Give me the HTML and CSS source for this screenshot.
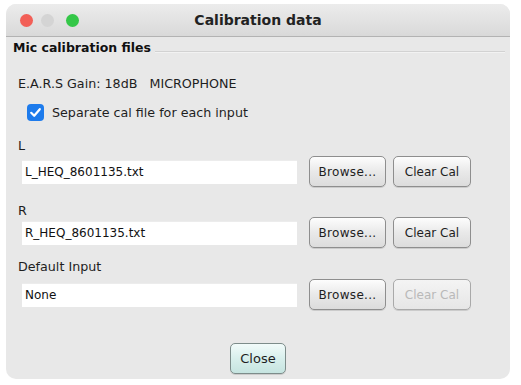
FILE: index.html
```html
<!DOCTYPE html>
<html>
<head>
<meta charset="utf-8">
<link rel="stylesheet" href="styles.css">
</head>
<body>
<div class="window">
  <div class="titlebar">
    <div class="lights">
      <span class="light red"></span>
      <span class="light gray"></span>
      <span class="light green"></span>
    </div>
    <div class="title">Calibration data</div>
  </div>
  <div class="content">
    <div class="legend">
      <span class="legend-text">Mic calibration files</span>
      <span class="legend-line"></span>
    </div>
    <div class="gain">E.A.R.S Gain: 18dB&nbsp;&nbsp;&nbsp;MICROPHONE</div>
    <label class="check-row">
      <span class="checkbox">
        <svg viewBox="0 0 17 17" width="17" height="17"><path d="M4.2 8.8 L7.2 11.8 L12.8 5.2" fill="none" stroke="#fff" stroke-width="2.2" stroke-linecap="round" stroke-linejoin="round"/></svg>
      </span>
      <span>Separate cal file for each input</span>
    </label>
    <div class="label l1">L</div>
    <div class="row">
      <div class="field">L_HEQ_8601135.txt</div>
      <button class="btn browse">Browse...</button>
      <button class="btn clear">Clear Cal</button>
    </div>
    <div class="label l2">R</div>
    <div class="row">
      <div class="field">R_HEQ_8601135.txt</div>
      <button class="btn browse">Browse...</button>
      <button class="btn clear">Clear Cal</button>
    </div>
    <div class="label l3">Default Input</div>
    <div class="row r3">
      <div class="field">None</div>
      <button class="btn browse">Browse...</button>
      <button class="btn clear disabled">Clear Cal</button>
    </div>
    <div class="footer">
      <button class="btn close">Close</button>
    </div>
  </div>
</div>
</body>
</html>
```
FILE: styles.css
```css
html, body {
  margin: 0;
  padding: 0;
  background: #ffffff;
}
body {
  font-family: "DejaVu Sans", "Liberation Sans", sans-serif;
  font-size: 12.7px;
  color: #1e1e1e;
}
.window {
  margin: 4px 0 0 6px;
  width: 504px;
  height: 375px;
  background: #e8e8e8;
  border-radius: 10px;
  overflow: hidden;
  display: flex;
  flex-direction: column;
}
.titlebar {
  height: 32px;
  flex: none;
  background: linear-gradient(#ececec, #d9d9d9);
  border-bottom: 1px solid #b3b3b3;
  display: flex;
  align-items: center;
  position: relative;
}
.lights {
  display: flex;
  gap: 8px;
  padding-left: 14px;
  margin-top: 1px;
}
.light {
  width: 13px;
  height: 13px;
  border-radius: 50%;
  display: block;
}
.red { background: #f25f57; }
.gray { background: #d4d4d4; }
.green { background: #34c748; }
.light.gray + .light.green { margin-left: 4px; }
.title {
  position: absolute;
  left: 0;
  right: 0;
  top: 0;
  bottom: 0;
  display: flex;
  align-items: center;
  justify-content: center;
  font-weight: bold;
  font-size: 14px;
  color: #222;
  pointer-events: none;
}
.content {
  flex: 1;
  display: flex;
  flex-direction: column;
}
.legend {
  height: 20px;
  display: flex;
  align-items: flex-end;
  padding-left: 7px;
  padding-right: 5px;
  gap: 4px;
}
.legend-text {
  font-weight: bold;
  font-size: 12.5px;
  color: #111;
  line-height: 18px;
}
.legend-line {
  flex: 1;
  height: 1px;
  background: #d2d2d2;
  border-bottom: 1px solid #f2f2f2;
  margin-bottom: 4px;
}
.gain {
  margin-top: 19px;
  height: 16px;
  line-height: 16px;
  padding-left: 12px;
}
.check-row {
  margin-top: 10px;
  height: 20px;
  display: flex;
  align-items: center;
  padding-left: 21px;
  gap: 8px;
}
.checkbox {
  width: 17px;
  height: 17px;
  border-radius: 4px;
  background: #1d7bec;
  display: flex;
}
.label {
  height: 14px;
  line-height: 14px;
  padding-left: 12px;
  margin-top: 16px;
}
.label.l1 { margin-top: 17px; }
.label.l2 { margin-top: 17px; }
.label.l3 { margin-top: 12px; }
.row {
  height: 31px;
  display: flex;
  align-items: center;
  padding-left: 16px;
  margin-top: 3px;
}
.label.l2 + .row { margin-top: -1px; }
.r3 { margin-top: 5px; }
.field {
  width: 275px;
  height: 24px;
  background: #fff;
  line-height: 24px;
  padding-left: 3px;
  box-sizing: border-box;
  font-size: 12px;
  color: #111;
  margin-right: 12px;
  box-shadow: inset 0 1px 0 #ececec;
}
.btn {
  font-family: inherit;
  font-size: 12px;
  height: 31px;
  border: 1px solid #8e8e8e;
  border-radius: 5px;
  background: linear-gradient(#fdfdfd, #e9e9e9 50%, #dcdcdc);
  color: #1e1e1e;
  padding: 0;
  box-shadow: 0 1px 0 rgba(0,0,0,0.12);
}
.browse { width: 77px; margin-right: 7px; letter-spacing: 0.3px; }
.clear { width: 78px; }
.disabled { color: #b9b9b9; border-color: #a9a9a9; background: linear-gradient(#f4f4f4, #e6e6e6); }
.footer {
  margin-top: 33px;
  display: flex;
  justify-content: center;
}
.close {
  width: 56px;
  height: 31px;
  background: linear-gradient(#f2fbfa, #d8efec 50%, #c6e4e0);
  border-color: #7d8c8a;
  font-size: 13px;
}
```
